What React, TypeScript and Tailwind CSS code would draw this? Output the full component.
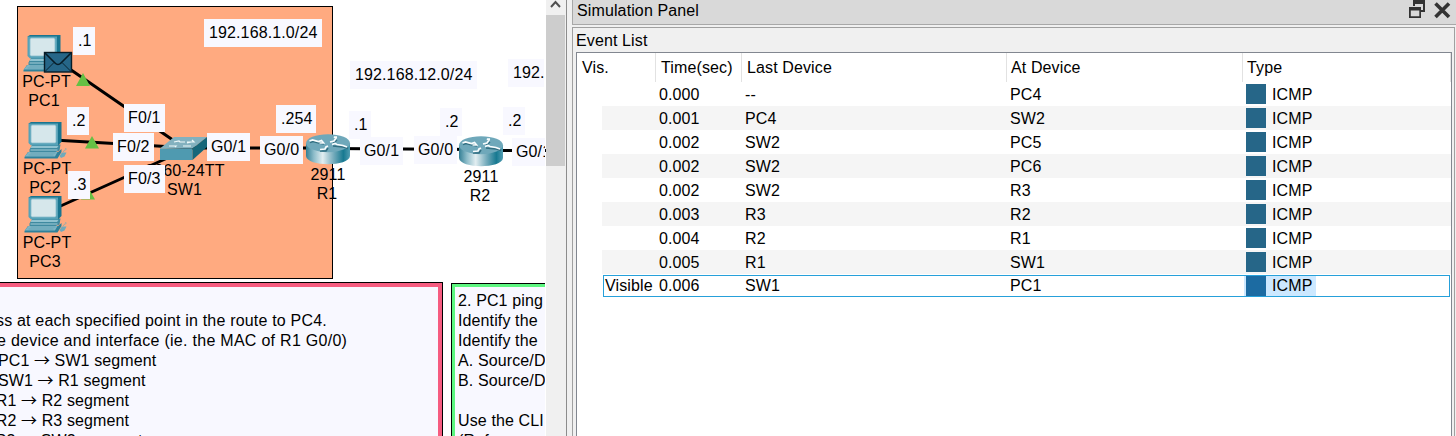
import React from "react";

function Note({ x, y, w, pad = 5, children }: { x: number; y: number; w: number; pad?: number; children: React.ReactNode }) {
  return (
    <div
      className="absolute flex h-7 items-center overflow-hidden whitespace-nowrap bg-[#f8f8ff] leading-none"
      style={{ left: x, top: y, width: w, paddingLeft: pad }}
    >
      {children}
    </div>
  );
}

function Name({ x, y, children }: { x: number; y: number; children: React.ReactNode }) {
  return (
    <div className="absolute flex h-5 w-24 items-center justify-center whitespace-nowrap leading-5" style={{ left: x - 48, top: y - 9 }}>
      {children}
    </div>
  );
}

function Pc({ x, y }: { x: number; y: number }) {
  return (
    <g transform={`translate(${x} ${y})`}>
      <path d="M8 22.500h28l-1 6-5 2H5v-3z" fill="#3f8aa0" />
      <path d="M7 24h27l-1.500 2H6z" fill="#8fc2d0" />
      <path d="M6 28h27" stroke="#bfe0e8" strokeWidth="0.8" />
      <path d="M4 1.500 6.500 0H37v20l-3.500 3.500z" fill="#19758f" />
      <path d="M4 1.500h29.500v22H6.500L4 21z" fill="#56a2b8" />
      <rect x="6.500" y="3" width="25" height="18" rx="1.500" fill="#d6e7eb" stroke="#88bdcb" strokeWidth="0.8" />
      <path d="M3.500 30h30l3.500-3v3l-4 6.500H0v-1.500z" fill="#2f819a" />
      <path d="M4 30h29l-2.500 4.500H0z" fill="#7eb5c5" />
      <path d="M6 31h25M4 33h25" stroke="#579bb0" strokeWidth="0.6" />
      <path d="m35 34 2.500-3.500h4.500l-2 4-3.500 1.500z" fill="#6faabb" />
      <path d="M39 30c0-3 4-1 2-4" fill="none" stroke="#75aab9" strokeWidth="0.8" />
    </g>
  );
}

function Router({ x, y, id }: { x: number; y: number; id: string }) {
  return (
    <g transform={`translate(${x} ${y})`}>
      <defs>
        <linearGradient id={id}>
          <stop offset="0" stopColor="#347f95" />
          <stop offset="0.180" stopColor="#8ebdca" />
          <stop offset="0.380" stopColor="#e2eef1" />
          <stop offset="0.620" stopColor="#78adbd" />
          <stop offset="0.850" stopColor="#177991" />
          <stop offset="1" stopColor="#529db2" />
        </linearGradient>
      </defs>
      <path d="M0 9v13c1 11 43 11 44 0V9z" fill={`url(#${id})`} />
      <ellipse cx="22" cy="9.200" rx="22" ry="9" fill="#6fa8ba" />
      <g fill="none" stroke="#326f82" strokeWidth="1.600">
        <path d="m4 8.500 3-1 6 1.500 5 1M27 9.500l4-3.500M27 12l10 1 5 1.500M14 17h6l2-3" />
      </g>
      <g fill="none" stroke="#f8fcfd" strokeWidth="1.700">
        <path d="m3.500 7 3-1 6 1.500 3-1 2 2.500h-4" />
        <path d="m24 8 4-1 2-3-2-1h3" />
        <path d="m26 10.500 3-1 2 1 6 1 4 1.500" />
        <path d="m14 15.500 5-.5 1-2 2-1" />
      </g>
    </g>
  );
}

function Devices() {
  return (
    <svg className="absolute left-0 top-0" width="546" height="282" viewBox="0 0 546 282">
      <g stroke="#000" strokeWidth="3">
        <path d="M45 52 183 147M45 139.500l138 8M45 213l138-62M183 148h145M328 148.500l152 1M480 150.500h66" fill="none" />
      </g>
      <path d="m83 73 7 13H76zM92 136l7 12.500H85zM88 187l7 12.500H81z" fill="#65c044" />
      <Pc x={23.5} y={35} />
      <Pc x={24.5} y={122} />
      <Pc x={24.5} y={196} />
      <g stroke="#071c27">
        <rect x="44.500" y="52.500" width="27" height="19.500" fill="#266688" strokeWidth="1.400" />
        <path d="m45 53 10 10q3 3 6 0L71 53" fill="none" strokeWidth="1.600" />
        <path d="m45 71.500 9-9M71 71.500l-9-9" fill="none" strokeWidth="0.9" />
      </g>
      <g>
        <path d="m160 148.500 14-11.500h33l-14.500 11.500z" fill="#83b1bf" />
        <path d="M160 148.500h32.500V160H160z" fill="#4f9ab0" />
        <path d="M192.500 148.500 207 137v10l-14.500 13z" fill="#17677a" />
        <path d="m174 142 5-1 1 1h5M187 142h7l-2-2M169 146h7l-1 1M183 146h8M187 143l4-1" fill="none" stroke="#eff9fa" strokeWidth="1.200" />
      </g>
      <Router x={306} y={134} id="routerOneBody" />
      <Router x={459} y={136} id="routerTwoBody" />
    </svg>
  );
}

function Arrow() {
  return <span className="inline-block w-4 font-['Noto_Sans_CJK_SC',sans-serif] leading-none tracking-normal">→</span>;
}

function Segment({ step, from, to }: { step: string; from: string; to: string }) {
  return (
    <div className="h-5">
      {step}. {from} <Arrow /> {to} segment
    </div>
  );
}

function Workspace() {
  return (
    <div className="relative h-full w-[546px] shrink-0 overflow-hidden bg-white">
      <div className="absolute left-[17px] top-[6px] h-[273px] w-[316px] border border-black bg-[#ffaa80]" />
      <Devices />
      <Name x={46.5} y={81}>PC-PT</Name>
      <Name x={44} y={100}>PC1</Name>
      <Name x={47} y={168}>PC-PT</Name>
      <Name x={45} y={187}>PC2</Name>
      <Name x={47} y={242}>PC-PT</Name>
      <Name x={45} y={261}>PC3</Name>
      <Name x={185} y={170}>2960-24TT</Name>
      <Name x={184.5} y={189}>SW1</Name>
      <Name x={328} y={174}>2911</Name>
      <Name x={327} y={193}>R1</Name>
      <Name x={481} y={176}>2911</Name>
      <Name x={480} y={195}>R2</Name>
      <Note x={73} y={27} w={22}>.1</Note>
      <Note x={67} y={107} w={22}>.2</Note>
      <Note x={68} y={171} w={22}>.3</Note>
      <Note x={124} y={104} w={41} pad={4}>F0/1</Note>
      <Note x={113} y={133} w={41} pad={4}>F0/2</Note>
      <Note x={124} y={165} w={41} pad={4}>F0/3</Note>
      <Note x={204} y={19} w={118}>192.168.1.0/24</Note>
      <Note x={276} y={105} w={40}>.254</Note>
      <Note x={350} y={61} w={127}>192.168.12.0/24</Note>
      <Note x={508} y={59} w={36}>192.</Note>
      <Note x={349} y={111} w={22}>.1</Note>
      <Note x={207} y={133} w={43} pad={4}>G0/1</Note>
      <Note x={260} y={136} w={43} pad={4}>G0/0</Note>
      <Note x={360} y={137} w={43} pad={4}>G0/1</Note>
      <Note x={440} y={108} w={22}>.2</Note>
      <Note x={414} y={136} w={43} pad={4}>G0/0</Note>
      <Note x={503} y={107} w={22}>.2</Note>
      <Note x={512} y={138} w={33} pad={4}>G0/1</Note>

      <div className="absolute -left-10 top-[282px] h-48 w-[483px] border border-black">
        <div className="h-full overflow-hidden whitespace-nowrap border-4 border-[#f65c80] bg-[#f8f8ff] pt-6 leading-5">
          <div className="pl-[31px] tracking-[0.19px]">ss at each specified point in the route to PC4.</div>
          <div className="pl-[32px] tracking-[0.28px]">e device and interface (ie. the MAC of R1 G0/0)</div>
          <div className="pl-[13px]">
            <Segment step="A" from="PC1" to="SW1" />
            <Segment step="B" from="SW1" to="R1" />
          </div>
          <div className="pl-[10px]">
            <Segment step="C" from="R1" to="R2" />
            <Segment step="D" from="R2" to="R3" />
            <Segment step="E" from="R3" to="SW2" />
          </div>
        </div>
      </div>
      <div className="absolute left-[451px] top-[283px] h-48 w-[94px] overflow-hidden border-l border-t border-black">
        <div className="h-full w-60 whitespace-nowrap border-l-[3px] border-t-[3px] border-[#5cf680] bg-[#f8f8ff] pl-[3px] pt-1 leading-5">
          <div>2. PC1 ping</div>
          <div>Identify the</div>
          <div>Identify the</div>
          <div>A. Source/D</div>
          <div>B. Source/D</div>
          <div className="h-5" />
          <div>Use the CLI</div>
          <div>(Refer</div>
        </div>
      </div>
    </div>
  );
}

function ScrollBar() {
  return (
    <div className="flex h-full w-[19px] shrink-0 flex-col bg-[#f0f0f0]">
      <div className="flex h-[15px] justify-center">
        <svg width="11" height="9" viewBox="0 0 11 9"><path d="M1 7 5.500 2 10 7" fill="none" stroke="#505050" strokeWidth="2" /></svg>
      </div>
      <div className="h-[151px] bg-[#cdcdcd]" />
    </div>
  );
}

const EVENTS = [
  ["0.000", "--", "PC4"],
  ["0.001", "PC4", "SW2"],
  ["0.002", "SW2", "PC5"],
  ["0.002", "SW2", "PC6"],
  ["0.002", "SW2", "R3"],
  ["0.003", "R3", "R2"],
  ["0.004", "R2", "R1"],
  ["0.005", "R1", "SW1"],
];

function EventRow({ event, index }: { event: string[]; index: number }) {
  return (
    <div
      className={`ml-[25px] grid h-6 grid-cols-[53px_86px_265px_235px_1fr] items-center leading-5 ${index % 2 === 1 ? "bg-[#f5f5f5]" : "bg-white"}`}
    >
      <div />
      <div className="pl-1 pt-0.5">{event[0]}</div>
      <div className="pl-1 pt-0.5">{event[1]}</div>
      <div className="pl-1 pt-0.5">{event[2]}</div>
      <div className="flex items-center gap-1.5 pl-[5px]">
        <span className="size-5 bg-[#266688]" />
        <span className="pt-0.5">ICMP</span>
      </div>
    </div>
  );
}

function SelectedRow() {
  return (
    <div className="ml-[26px] mr-px mt-px grid h-[22px] grid-cols-[51px_86px_265px_234px_1fr] items-center border border-[#26a0da] bg-white leading-5">
      <div className="pl-px">Visible</div>
      <div className="pl-1">0.006</div>
      <div className="pl-1">SW1</div>
      <div className="pl-1">PC1</div>
      <div className="flex">
        <div className="ml-1 flex h-5 w-[72px] items-center gap-1.5 bg-[#cce8ff] pl-[2px]">
          <span className="size-5 bg-[#1c6ba2]" />
          <span>ICMP</span>
        </div>
      </div>
    </div>
  );
}

function SimulationPanel() {
  return (
    <div className="flex h-full min-w-0 flex-1 flex-col">
      <div className="flex h-[25px] items-center border-b border-l border-[#a8a8a8] bg-[#d9d9d9] pb-[3px] pl-1">
        <span>Simulation Panel</span>
        <svg className="ml-auto" width="48" height="22" viewBox="0 0 48 22">
          <path d="M5 0h12v12h-4v-2h2V4H7v2H5z" fill="#333" />
          <path d="M1 7h12v11H1zm1.800 3.500v5.800h8.500v-5.800z" fill="#333" fillRule="evenodd" />
          <path d="m27.500 3.500 13.500 13.500m0-13.500L27.500 17" stroke="#333" strokeWidth="3.600" />
        </svg>
      </div>
      <div className="mr-px mt-[2px] flex min-h-0 flex-1 flex-col border-l border-r border-t border-[#a0a0a0] bg-[#f0f0f0] pl-[3px] pr-[2px]">
        <div className="h-6 leading-[25px]">Event List</div>
        <div className="min-h-0 flex-1 border-l border-r border-t border-[#828790] bg-white">
          <div className="grid h-[29px] grid-cols-[79px_86px_265px_236px_1fr] items-stretch leading-[29px]">
            <div className="border-r border-[#e2e2e2] pl-[5px]">Vis.</div>
            <div className="border-r border-[#e2e2e2] pl-[5px]">Time(sec)</div>
            <div className="border-r border-[#e2e2e2] pl-[5px]">Last Device</div>
            <div className="border-r border-[#e2e2e2] pl-[4px]">At Device</div>
            <div className="border-r border-[#e2e2e2] pl-[4px]">Type</div>
          </div>
          {EVENTS.map((event, index) => (
            <EventRow key={index} event={event} index={index} />
          ))}
          <SelectedRow />
        </div>
      </div>
    </div>
  );
}

export default function App() {
  return (
    <div className="flex h-[436px] w-[1456px] overflow-hidden bg-[#f0f0f0] font-['Liberation_Sans',Arial,sans-serif] text-[16px] tracking-[0.12px] text-black">
      <Workspace />
      <ScrollBar />
      <div className="ml-px mr-[5px] h-full w-px shrink-0 bg-[#8c8c8c]" />
      <SimulationPanel />
    </div>
  );
}
